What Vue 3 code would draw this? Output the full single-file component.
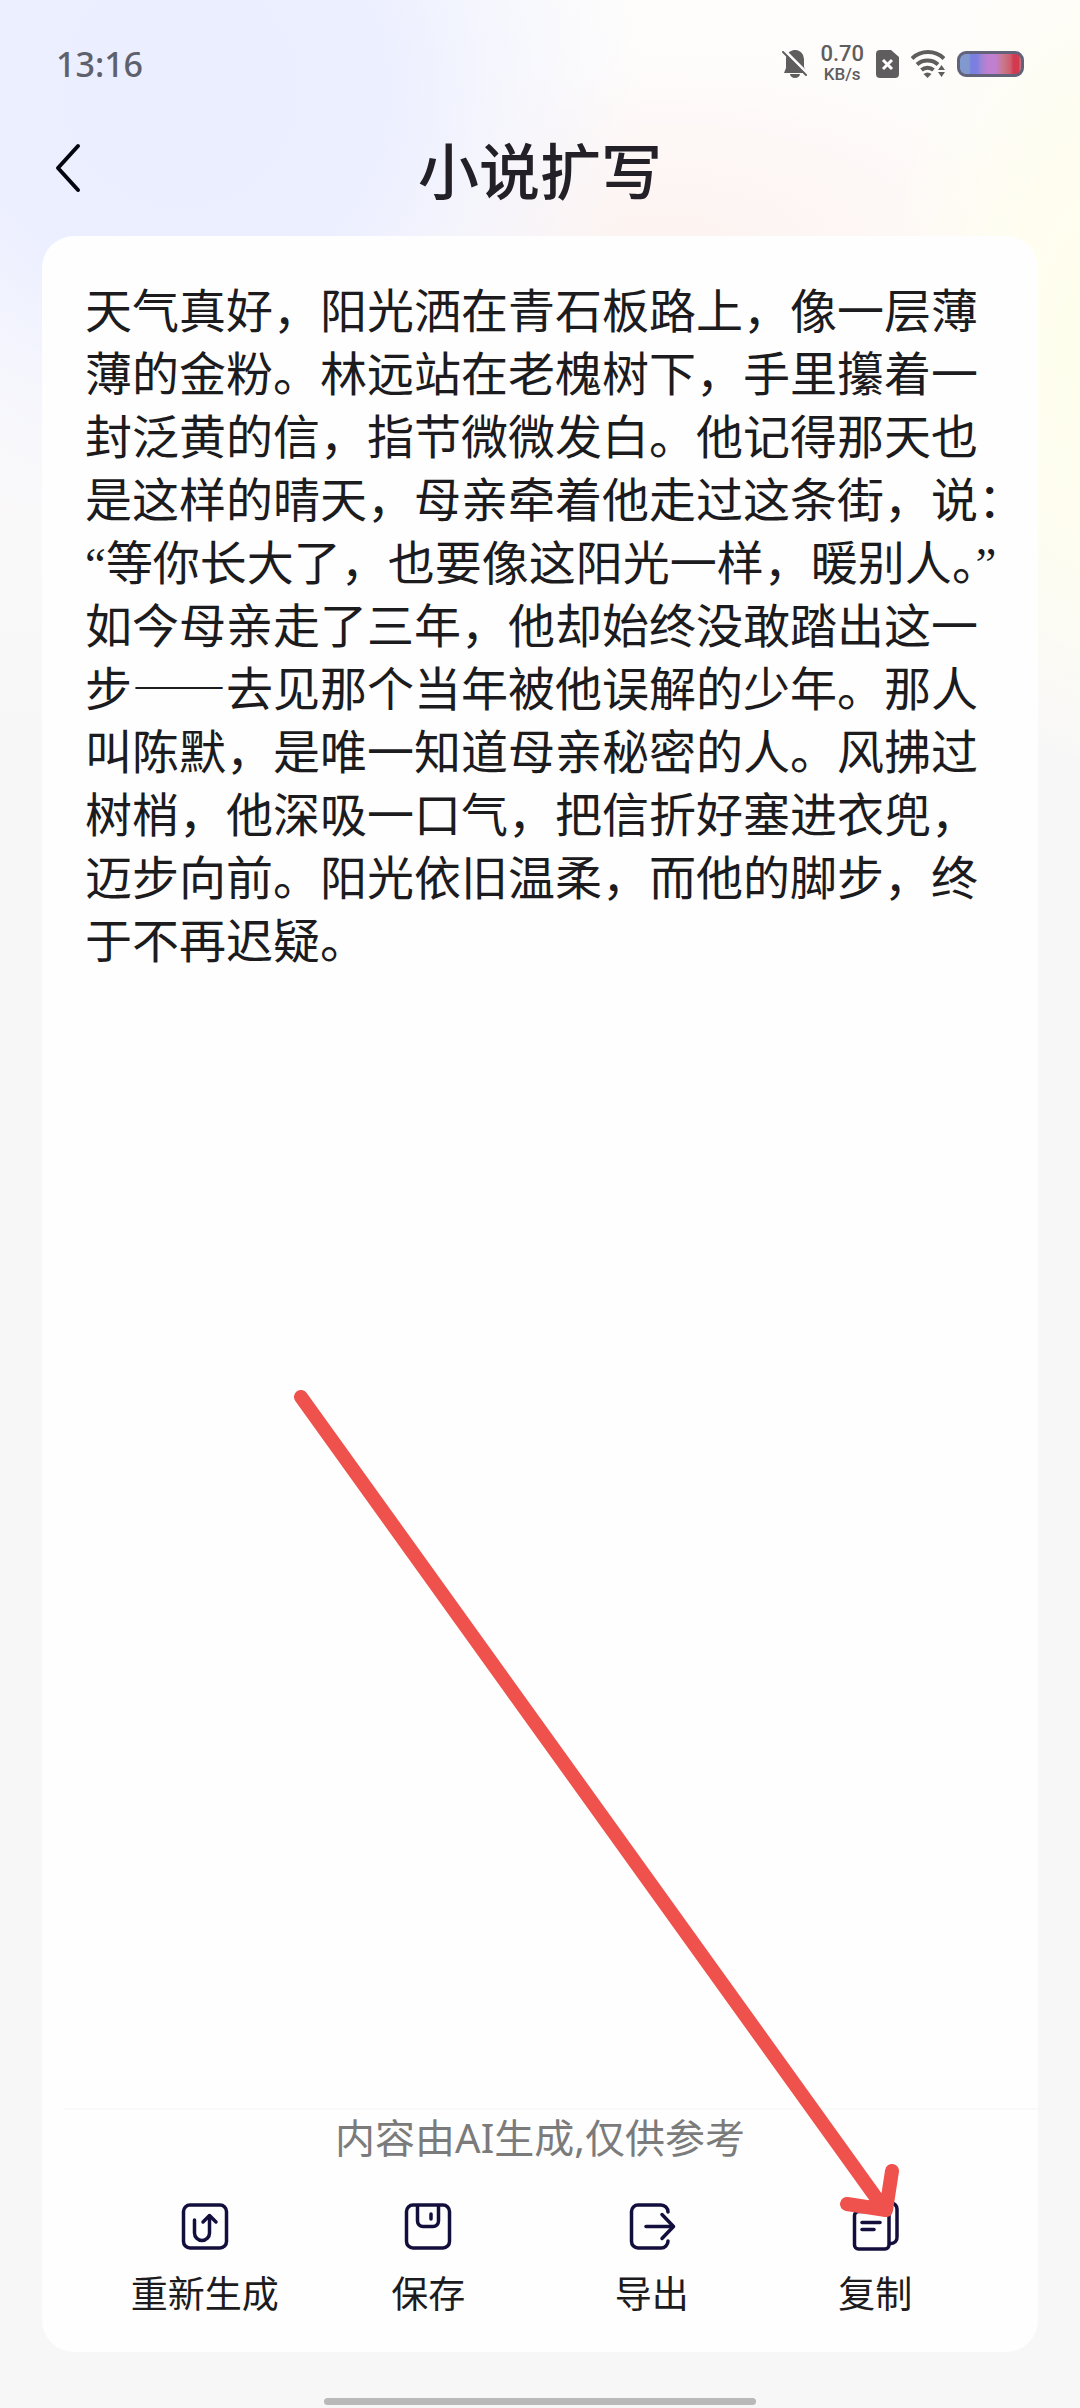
<template>
  <div class="page" lang="zh-CN">
    <div class="status-bar">
      <span class="time">13:16</span>
      <div class="status-icons">
        <svg class="icon-bell" viewBox="0 0 26 28">
          <path d="M12 0a9 9 0 0 1 10 9v8l3 6H2l2-5V9c0-5 3-8 8-9z" fill="#5f5d5d" />
          <path d="M8 24h10a5 4 0 0 1-10 0z" fill="#5f5d5d" />
          <path d="M2 0l24 24" stroke="#fdfbfb" stroke-width="3" />
          <path d="M1 2l23 23" stroke="#5f5d5d" stroke-width="2" stroke-linecap="round" />
        </svg>
        <div class="speed">
          <span class="speed-value">0.70</span>
          <span class="speed-unit">KB/s</span>
        </div>
        <svg class="icon-sim" viewBox="0 0 23 28">
          <path d="M4 0h11l8 7v17a4 4 0 0 1-4 4H4a4 4 0 0 1-4-4V4a4 4 0 0 1 4-4z" fill="#5f5d5d" />
          <path d="M7 10l9 9M16 10l-9 9" stroke="#fff" stroke-width="3" />
        </svg>
        <svg class="icon-wifi" viewBox="0 0 34 28">
          <g fill="none" stroke="#5f5d5d" stroke-width="4">
            <path d="M1 8.500a23 23 0 0 1 32 0" />
            <path d="M6 14.500a16 16 0 0 1 21 0" />
            <path d="M10.500 20a9 9 0 0 1 12 0" />
          </g>
          <path d="M12.500 24q4-3 8 0l-4 4z" fill="#5f5d5d" />
          <path d="M27 20l3.500-5 3.500 5zM27 22l3.500 5 3.500-5z" fill="#5f5d5d" />
        </svg>
        <div class="battery"></div>
      </div>
    </div>

    <header class="nav-bar">
      <button class="back" type="button" aria-label="返回">
        <svg viewBox="0 0 28 50">
          <path d="M24 3L4 25l20 22" fill="none" stroke="#05050f" stroke-width="4" stroke-linecap="round" stroke-linejoin="round" />
        </svg>
      </button>
      <h1 class="title">小说扩写</h1>
    </header>

    <main class="card">
      <article class="content">
        <p v-for="(line, i) in lines" :key="i" class="line"><span v-for="(part, j) in splitLine(line)" :key="j" :class="partClass(part)">{{ part }}</span></p>
      </article>

      <footer class="footer">
        <p class="notice">内容由AI生成,仅供参考</p>
        <div class="actions">
          <button v-for="action in actions" :key="action.name" class="action" type="button">
            <svg class="action-icon" viewBox="0 0 52 52">
              <path v-for="d in action.paths" :key="d" :d="d" />
            </svg>
            <span>{{ action.name }}</span>
          </button>
        </div>
      </footer>
    </main>

    <div class="home-bar"></div>

    <svg class="pointer" viewBox="0 0 1080 2408" preserveAspectRatio="none">
      <path d="M301 1397L885 2210M847 2204L886 2210L892 2171" />
    </svg>
  </div>
</template>

<script setup>
const lines = [
  '天气真好，阳光洒在青石板路上，像一层薄',
  '薄的金粉。林远站在老槐树下，手里攥着一',
  '封泛黄的信，指节微微发白。他记得那天也',
  '是这样的晴天，母亲牵着他走过这条街，说：',
  '“等你长大了，也要像这阳光一样，暖别人。”',
  '如今母亲走了三年，他却始终没敢踏出这一',
  '步——去见那个当年被他误解的少年。那人',
  '叫陈默，是唯一知道母亲秘密的人。风拂过',
  '树梢，他深吸一口气，把信折好塞进衣兜，',
  '迈步向前。阳光依旧温柔，而他的脚步，终',
  '于不再迟疑。'
]

// quotes are set narrow, and so is a full stop right before a closing quote
const splitLine = (line) => line.split(/(“|。(?=”)|”)/).filter(Boolean)

const partClass = (part) => {
  if (part === '“' || part === '”') return 'quote'
  if (part === '。') return 'half'
  return ''
}

const actions = [
  {
    name: '重新生成',
    paths: [
      'M11 4h30a6.500 6.500 0 0 1 6.500 6.500v30a6.500 6.500 0 0 1-6.500 6.500h-30a6.500 6.500 0 0 1-6.500-6.500v-30a6.500 6.500 0 0 1 6.500-6.500z',
      'M15.500 19v13a7.500 7.500 0 0 0 15 0V15',
      'M24 21l6.500-6.500L37 21'
    ]
  },
  {
    name: '保存',
    paths: [
      'M11 4h30a6.500 6.500 0 0 1 6.500 6.500v30a6.500 6.500 0 0 1-6.500 6.500h-30a6.500 6.500 0 0 1-6.500-6.500v-30a6.500 6.500 0 0 1 6.500-6.500z',
      'M15.500 5v15a5.500 5.500 0 0 0 5.500 5.500h10a5.500 5.500 0 0 0 5.500-5.500V5',
      'M29 13v5'
    ]
  },
  {
    name: '导出',
    paths: [
      'M42 11a7 7 0 0 0-7-7H12a6.500 6.500 0 0 0-6.500 6.500v30a6.500 6.500 0 0 0 6.500 6.500h23a7 7 0 0 0 7-7',
      'M20 25.500h27',
      'M36 13.500l11.500 12L36 37.500'
    ]
  },
  {
    name: '复制',
    paths: [
      'M9 10.500h27a4 4 0 0 1 4 4v29.500a4 4 0 0 1-4 4H9.500a4 4 0 0 1-4-4V14.500a4 4 0 0 1 4-4z',
      'M14 2h28a6 6 0 0 1 6 6v28a6 6 0 0 1-6 6.500h-1',
      'M13 21.500h18',
      'M13 28.500h12'
    ]
  }
]
</script>

<style>
body {
  margin: 0;
  background: #f7f7f8;
}
</style>

<style scoped>
.page {
  position: relative;
  display: flex;
  flex-direction: column;
  box-sizing: border-box;
  min-height: 100vh;
  font-family: "Noto Sans", "Noto Sans CJK SC", sans-serif;
  color: #1c1b1d;
  background:
    radial-gradient(ellipse 460px 460px at 180px 90px, #ebeefe 0%, #ecefff 45%, rgba(242, 244, 254, 0.700) 70%, rgba(247, 247, 248, 0) 100%),
    radial-gradient(ellipse 220px 440px at 1100px 340px, #ffffec 0%, rgba(255, 254, 238, 0.800) 45%, rgba(255, 253, 248, 0) 100%),
    radial-gradient(ellipse 420px 200px at 660px 250px, #fdf3f0 0%, rgba(253, 245, 243, 0.700) 50%, rgba(254, 251, 250, 0) 100%),
    linear-gradient(180deg, #fefdfc 0px, #fdfbfb 300px, #f7f7f8 800px);
}

p,
h1 {
  margin: 0;
}

button {
  padding: 0;
  border: none;
  background: none;
  font: inherit;
  color: inherit;
}

.status-bar {
  display: flex;
  align-items: center;
  justify-content: space-between;
  height: 128px;
  padding: 0 56px;
}

.time {
  font-size: 34px;
  font-weight: 500;
  line-height: 48px;
  color: #5e616c;
}

.status-icons {
  display: flex;
  align-items: center;
  gap: 12px;
}

.icon-bell {
  width: 26px;
  height: 28px;
}

.speed {
  display: flex;
  flex-direction: column;
  align-items: center;
  font-family: Roboto, sans-serif;
  font-weight: 500;
  color: #5f5d5d;
}

.speed-value {
  font-size: 22px;
  line-height: 20px;
}

.speed-unit {
  font-size: 17px;
  line-height: 20px;
}

.icon-sim {
  width: 23px;
  height: 28px;
}

.icon-wifi {
  width: 34px;
  height: 28px;
}

.battery {
  box-sizing: border-box;
  width: 67px;
  height: 26px;
  border: 3px solid #62627a;
  border-radius: 9px;
  background: linear-gradient(90deg, #8299d0 0 14%, #7b80e0 18% 28%, #9d83d6 34%, #c07fd0 46% 58%, #c9798f 70%, #cf5f70 82%, #d23a50 88% 96%, #c77b88 100%);
}

.nav-bar {
  display: grid;
  grid-template-columns: 28px 1fr 28px;
  align-items: start;
  padding: 0 54px;
  margin-bottom: 24px;
}

.back {
  height: 50px;
  margin-top: 15px;
}

.back svg {
  display: block;
  width: 28px;
  height: 50px;
}

.title {
  padding-top: 4px;
  font-size: 61px;
  font-weight: 500;
  line-height: 80px;
  text-align: center;
  color: #232028;
}

.card {
  display: flex;
  flex: 1;
  flex-direction: column;
  justify-content: space-between;
  margin: 0 42px;
  padding-top: 40px;
  border-radius: 32px;
  background: #fefefe;
}

.content {
  padding-left: 43px;
}

.line {
  font-family: "Noto Sans CJK SC", sans-serif;
  font-size: 47px;
  line-height: 63px;
  white-space: nowrap;
}

.quote {
  font-family: "Liberation Serif", serif;
  line-height: 1;
}

.half {
  font-feature-settings: "halt";
}

.footer {
  padding-bottom: 36px;
}

.notice {
  margin-left: 22px;
  margin-bottom: 35px;
  padding-right: 22px;
  border-top: 2px solid #f9f9f9;
  font-size: 40px;
  line-height: 56px;
  text-align: center;
  color: #7b7b7b;
}

.actions {
  display: grid;
  grid-template-columns: repeat(4, 1fr);
  padding: 0 51px;
}

.action {
  display: flex;
  flex-direction: column;
  align-items: center;
  gap: 19px;
  font-size: 37px;
  line-height: 44px;
}

.action-icon {
  width: 52px;
  height: 52px;
  fill: none;
  stroke: #130f3c;
  stroke-width: 3.500;
  stroke-linecap: round;
  stroke-linejoin: round;
}

.home-bar {
  width: 40%;
  height: 7px;
  margin: 46px auto 3px;
  border-radius: 4px;
  background: #b9b9b9;
}

.pointer {
  position: absolute;
  top: 0;
  left: 0;
  width: 100%;
  height: 100%;
  fill: none;
  stroke: #ef524d;
  stroke-width: 14;
  stroke-linecap: round;
  stroke-linejoin: round;
  pointer-events: none;
}
</style>
